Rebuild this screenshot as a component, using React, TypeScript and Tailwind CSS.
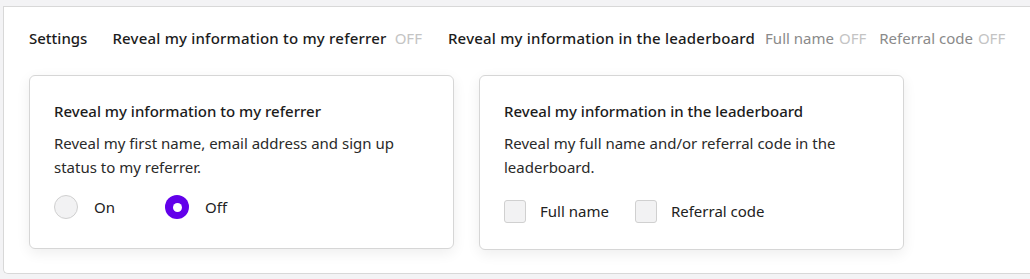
import React, { useState } from "react";

const Radio = ({ checked, label, onClick }: { checked: boolean; label: string; onClick: () => void }) => (
  <button type="button" onClick={onClick} className="flex items-center gap-4">
    {checked ? (
      <span className="flex h-6 w-6 items-center justify-center rounded-full bg-[#6200ea]">
        <span className="h-[9px] w-[9px] rounded-full bg-white" />
      </span>
    ) : (
      <span className="h-6 w-6 rounded-full border border-[#d0d0d0] bg-[#f2f2f3]" />
    )}
    <span className="text-[15px] leading-6 text-[#222]">{label}</span>
  </button>
);

const Checkbox = ({ checked, label, onClick }: { checked: boolean; label: string; onClick: () => void }) => (
  <button type="button" onClick={onClick} className="flex items-center gap-[14px]">
    <span
      className={
        checked
          ? "h-[23px] w-[22px] rounded-[3px] border border-[#6200ea] bg-[#6200ea]"
          : "h-[23px] w-[22px] rounded-[3px] border border-[#d0d0d0] bg-[#f2f2f3]"
      }
    />
    <span className="text-[15px] leading-6 text-[#222]">{label}</span>
  </button>
);

const App = () => {
  const [referrer, setReferrer] = useState(false);
  const [fullName, setFullName] = useState(false);
  const [referralCode, setReferralCode] = useState(false);

  const onOff = (v: boolean) => (v ? "ON" : "OFF");

  return (
    <div className="h-[279px] w-[1030px] bg-[#f3f3f5] pt-[6px] pl-[3px] font-['Noto_Sans',sans-serif]">
      <div className="h-[268px] rounded-bl-[5px] border-t border-b border-l border-[#d8d8d8] bg-white pl-[25px] pt-[19px]">
        <div className="flex items-baseline text-[15px] leading-6 whitespace-nowrap">
          <span className="font-medium text-[#1c1c1c]">Settings</span>
          <span className="ml-[25px] font-medium tracking-[0.2px] text-[#1c1c1c]">Reveal my information to my referrer</span>
          <span className="ml-2 text-[#c4c4c4]">{onOff(referrer)}</span>
          <span className="ml-[26px] font-medium tracking-[0.2px] text-[#1c1c1c]">Reveal my information in the leaderboard</span>
          <span className="ml-[10px] text-[#8a8a8a]">Full name</span>
          <span className="ml-[5px] text-[#c4c4c4]">{onOff(fullName)}</span>
          <span className="ml-[13px] text-[#8a8a8a]">Referral code</span>
          <span className="ml-[5px] text-[#c4c4c4]">{onOff(referralCode)}</span>
        </div>

        <div className="mt-[25px] flex gap-[25px]">
          <div className="h-[174px] w-[425px] rounded-md border border-[#d6d6d6] bg-white px-6 pt-[23px] shadow-[0_4px_14px_rgba(0,0,0,0.07)]">
            <div className="text-[15px] leading-6 font-medium text-[#1c1c1c]">Reveal my information to my referrer</div>
            <p className="mt-[8px] text-[15px] leading-6 text-[#2a2a2a]">
              Reveal my first name, email address and sign up
              <br />
              status to my referrer.
            </p>
            <div className="mt-[16px] flex gap-[50px]">
              <Radio checked={referrer} label="On" onClick={() => setReferrer(true)} />
              <Radio checked={!referrer} label="Off" onClick={() => setReferrer(false)} />
            </div>
          </div>

          <div className="h-[175px] w-[425px] rounded-md border border-[#d6d6d6] bg-white px-6 pt-[23px] shadow-[0_4px_14px_rgba(0,0,0,0.07)]">
            <div className="text-[15px] leading-6 font-medium text-[#1c1c1c]">Reveal my information in the leaderboard</div>
            <p className="mt-[8px] text-[15px] leading-6 text-[#2a2a2a]">
              Reveal my full name and/or referral code in the
              <br />
              leaderboard.
            </p>
            <div className="mt-[20px] flex gap-[26px]">
              <Checkbox checked={fullName} label="Full name" onClick={() => setFullName(!fullName)} />
              <Checkbox checked={referralCode} label="Referral code" onClick={() => setReferralCode(!referralCode)} />
            </div>
          </div>
        </div>
      </div>
    </div>
  );
};

export default App;
